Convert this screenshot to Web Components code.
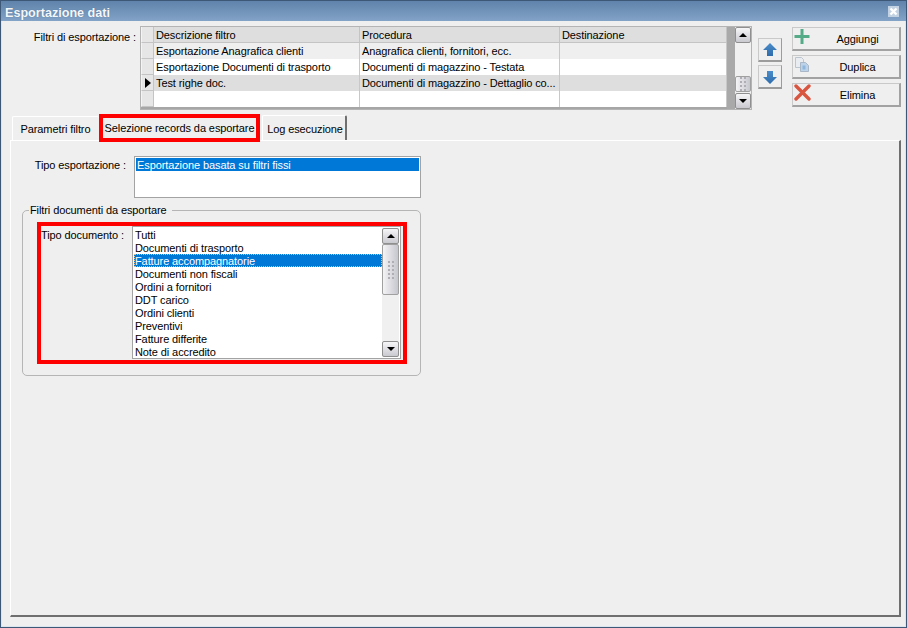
<!DOCTYPE html>
<html lang="it">
<head>
<meta charset="utf-8">
<title>Esportazione dati</title>
<style>
    html, body { margin: 0; padding: 0; background: #efefef; }
    body { font: 11px/13px "Liberation Sans", Arial, sans-serif; letter-spacing: -0.1px; color: #000; }
</style>
</head>
<body>
<export-window>
    <title-bar slot="title">Esportazione dati</title-bar>

    <top-row slot="top">
        <span slot="label">Filtri di esportazione :</span>
        <filter-grid slot="grid"></filter-grid>
        <move-button slot="moves" dir="up"></move-button>
        <move-button slot="moves" dir="down"></move-button>
        <action-button slot="actions" icon="add">Aggiungi</action-button>
        <action-button slot="actions" icon="copy">Duplica</action-button>
        <action-button slot="actions" icon="del">Elimina</action-button>
    </top-row>

    <tab-strip slot="tabs">
        <tab-item style="--w:87px">Parametri filtro</tab-item>
        <tab-item style="--w:161px" selected>Selezione records da esportare</tab-item>
        <tab-item style="--w:85px" last>Log esecuzione</tab-item>
    </tab-strip>

    <tab-panel slot="panel">
        <field-row style="--label-w:104px;--gap:8px">
            <span slot="label">Tipo esportazione :</span>
            <list-box style="width:287px;height:42px" items="Esportazione basata su filtri fissi" selected="0"></list-box>
        </field-row>
        <group-box legend="Filtri documenti da esportare">
            <red-frame>
                <field-row style="--label-w:83px;--gap:8px">
                    <span slot="label">Tipo documento :</span>
                    <list-box scroll style="width:269px;height:133px"
                        items="Tutti|Documenti di trasporto|Fatture accompagnatorie|Documenti non fiscali|Ordini a fornitori|DDT carico|Ordini clienti|Preventivi|Fatture differite|Note di accredito"
                        selected="2"></list-box>
                </field-row>
            </red-frame>
        </group-box>
    </tab-panel>
</export-window>

<script>
// small helper, every component is just a shadow root filled from a string
const shadow = (el, html) => {
    el.attachShadow({ mode: "open" }).innerHTML = html;
};

class ExportWindow extends HTMLElement {
    constructor() {
        super();
        shadow(this, `
            <style>
                :host {
                    display: flex;
                    flex-direction: column;
                    box-sizing: border-box;
                    width: 907px;
                    height: 628px;
                    background: #efefef;
                    border: 1px solid #3d5877;
                    box-shadow: inset -1px -1px 0 #dbe5ee, inset 1px 0 0 #dbe5ee;
                    overflow: hidden;
                }
                .panel { flex: 1; display: flex; min-height: 0; padding: 0 4px 10px 9px; }
            </style>
            <slot name="title"></slot>
            <slot name="top"></slot>
            <slot name="tabs"></slot>
            <div class="panel"><slot name="panel"></slot></div>
        `);
    }
}

class TitleBar extends HTMLElement {
    constructor() {
        super();
        shadow(this, `
            <style>
                :host {
                    display: flex;
                    align-items: center;
                    justify-content: space-between;
                    flex: none;
                    box-sizing: border-box;
                    height: 20px;
                    padding: 4px 7px 0 4px;
                    background: linear-gradient(#5f83ab, #83a3c7);
                    color: #f4f7fa;
                    font: bold 12.6px "Liberation Sans", Arial, sans-serif;
                    letter-spacing: 0;
                    text-shadow: 0 0 1px #4c6a8c;
                }
                svg { display: block; margin-top: -3px; }
            </style>
            <slot></slot>
            <svg width="11" height="11" viewBox="0 0 11 11">
                <rect width="11" height="11" fill="#c3d2e2"/>
                <path d="M2.5 2.5l6 6M8.5 2.5l-6 6" stroke="#fff" stroke-width="2.4"/>
            </svg>
        `);
    }
}

class TopRow extends HTMLElement {
    constructor() {
        super();
        shadow(this, `
            <style>
                :host {
                    display: flex;
                    flex: none;
                    height: 93px;
                    padding-top: 5px;
                    box-sizing: border-box;
                }
                .label { width: 135px; text-align: right; padding-top: 5px; flex: none; }
                .moves {
                    display: flex;
                    flex-direction: column;
                    align-items: center;
                    gap: 3px;
                    width: 26px;
                    margin: 12px 9px 0 5px;
                    flex: none;
                }
                .actions { display: flex; flex-direction: column; gap: 4px; width: 109px; flex: none; margin-top: 1px; }
                .grid { margin-left: 4px; flex: none; }
            </style>
            <div class="label"><slot name="label"></slot></div>
            <div class="grid"><slot name="grid"></slot></div>
            <div class="moves"><slot name="moves"></slot></div>
            <div class="actions"><slot name="actions"></slot></div>
        `);
    }
}

class FilterGrid extends HTMLElement {
    constructor() {
        super();
        const rows = [
            ["Esportazione Anagrafica clienti", "Anagrafica clienti, fornitori, ecc.", "", "#efefef"],
            ["Esportazione Documenti di trasporto", "Documenti di magazzino - Testata", "", "#fff"],
            ["Test righe doc.", "Documenti di magazzino - Dettaglio co...", "", "#dedede", true],
            ["", "", "", "#fff"],
        ];
        const cells = rows.map(([a, b, c, bg, current]) => `
            <div class="rh">${current ? '<i></i>' : ""}</div>
            <div class="c" style="background:${bg}">${a}</div>
            <div class="c" style="background:${bg}">${b}</div>
            <div class="c" style="background:${bg}">${c}</div>
        `).join("");
        shadow(this, `
            <style>
                :host {
                    display: flex;
                    box-sizing: border-box;
                    width: 612px;
                    height: 84px;
                    border: 1px solid #b4b4b4;
                    background: #fff;
                }
                .table {
                    display: grid;
                    grid-template-columns: 13px 206px 200px 167px;
                    grid-auto-rows: 16px;
                    flex: none;
                    width: 586px;
                    border-bottom: 2px solid #a6a6a6;
                    align-content: start;
                    height: 82px;
                    box-sizing: border-box;
                }
                .rh, .h {
                    background: #e2e2e2;
                    border-right: 1px solid #c4c4c4;
                    border-bottom: 1px solid #c4c4c4;
                    box-sizing: border-box;
                }
                .rh { background: #e6e6e6; display: flex; align-items: center; justify-content: center; border-left: 1px solid #f4f4f4; }
                .rh i {
                    border-left: 6px solid #000;
                    border-top: 5px solid transparent;
                    border-bottom: 5px solid transparent;
                }
                .h, .c {
                    padding: 1px 0 0 2px;
                    line-height: 15px;
                    white-space: nowrap;
                    overflow: hidden;
                    box-sizing: border-box;
                }
                .h { background: #dedede; }
                .c { border-right: 1px solid #c8c8c8; }
                .strip { width: 8px; background: #a9a9a9; flex: none; }
                scroll-bar { flex: 1; }
            </style>
            <div class="table">
                <div class="rh"></div>
                <div class="h">Descrizione filtro</div>
                <div class="h">Procedura</div>
                <div class="h">Destinazione</div>
                ${cells}
            </div>
            <div class="strip"></div>
            <scroll-bar before="33" thumb="16"></scroll-bar>
        `);
    }
}

class ScrollBar extends HTMLElement {
    constructor() {
        super();
        const before = this.getAttribute("before") || 0;
        const thumb = this.getAttribute("thumb") || 16;
        shadow(this, `
            <style>
                :host {
                    display: flex;
                    flex-direction: column;
                    box-sizing: border-box;
                    width: 16px;
                    background: #f0f0f0;
                }
                .b, .t {
                    box-sizing: border-box;
                    flex: none;
                    border: 1px solid #8f8f8f;
                    border-radius: 2px;
                    background: linear-gradient(#f6f6f8, #c9c9d0);
                    display: flex;
                    align-items: center;
                    justify-content: center;
                }
                .b { height: 16px; }
                .t {
                    background: linear-gradient(90deg, #f4f4f6, #c6c6ce);
                    border-color: #a0a0a0;
                }
                .grip {
                    width: 6px;
                    height: 100%;
                    max-height: 18px;
                    background: radial-gradient(circle at 1px 1px, #aeaeb4 1px, transparent 1.2px) 0 0 / 4px 4px;
                }
                .up { border-bottom: 4px solid #000; border-left: 4px solid transparent; border-right: 4px solid transparent; }
                .dn { border-top: 4px solid #000; border-left: 4px solid transparent; border-right: 4px solid transparent; }
                .gap { flex: 1; }
            </style>
            <div class="b"><i class="up"></i></div>
            <div style="height:${before}px;flex:none"></div>
            <div class="t" style="height:${thumb}px"><div class="grip"></div></div>
            <div class="gap"></div>
            <div class="b"><i class="dn"></i></div>
        `);
    }
}

class MoveButton extends HTMLElement {
    constructor() {
        super();
        const up = this.getAttribute("dir") === "up";
        const path = up
            ? "M8 1L15 8H11V14H5V8H1Z"
            : "M8 15L1 8H5V2H11V8H15Z";
        shadow(this, `
            <style>
                :host {
                    display: flex;
                    align-items: center;
                    justify-content: center;
                    box-sizing: border-box;
                    width: 24px;
                    height: 24px;
                    border: 1px solid #c9c9c9;
                    border-right-color: #9c9c9c;
                    border-bottom: 2px solid #9c9c9c;
                }
            </style>
            <svg width="16" height="16" viewBox="0 0 16 16">
                <defs>
                    <linearGradient id="g" x1="0" y1="0" x2="0" y2="1">
                        <stop offset="0" stop-color="#4a8ccb"/>
                        <stop offset="1" stop-color="#2f6cab"/>
                    </linearGradient>
                </defs>
                <path d="${path}" fill="url(#g)"/>
            </svg>
        `);
    }
}

const ACTION_ICONS = {
    add: `<path d="M6.5 1h3v6h6v3h-6v6h-3v-6h-6v-3h6z" fill="#55ab87"/>`,
    copy: `<path d="M1.5 1.5h6l2 2v8h-8z" fill="#e9edf2" stroke="#bcc4ce"/>
           <path d="M6.5 6.5h5l3 3v6h-8z" fill="#bcd3ea" stroke="#a9b7c6"/>
           <path d="M8.5 9.5h3v4h-3z" fill="#8fb6dd"/>`,
    del: `<path d="M2 2l13 13M15 2L2 15" stroke="#d9553f" stroke-width="3.4" stroke-linecap="round"/>`,
};

class ActionButton extends HTMLElement {
    constructor() {
        super();
        shadow(this, `
            <style>
                :host {
                    display: flex;
                    align-items: center;
                    box-sizing: border-box;
                    height: 24px;
                    border: 1px solid #c9c9c9;
                    border-right: 2px solid #a2a2a2;
                    border-bottom: 2px solid #a2a2a2;
                    padding-left: 1px;
                }
                svg { flex: none; display: block; margin-top: -4px; }
                span { flex: 1; text-align: center; padding-left: 5px; padding-top: 2px; }
            </style>
            <svg width="17" height="17" viewBox="0 0 17 17">${ACTION_ICONS[this.getAttribute("icon")]}</svg>
            <span><slot></slot></span>
        `);
    }
}

class TabStrip extends HTMLElement {
    constructor() {
        super();
        shadow(this, `
            <style>
                :host {
                    display: flex;
                    align-items: flex-start;
                    flex: none;
                    height: 26px;
                    padding-left: 11px;
                    position: relative;
                    z-index: 1;
                }
            </style>
            <slot></slot>
        `);
    }
}

class TabItem extends HTMLElement {
    constructor() {
        super();
        shadow(this, `
            <style>
                :host {
                    display: flex;
                    align-items: center;
                    justify-content: center;
                    box-sizing: border-box;
                    flex: none;
                    width: var(--w);
                    height: 24px;
                    margin-top: 2px;
                    border-top: 1px solid #fff;
                    border-left: 1px solid #fff;
                    border-radius: 2px 2px 0 0;
                    white-space: nowrap;
                    padding: 2px 1px 0 0;
                }
                :host([selected]) {
                    height: 28px;
                    margin: 0;
                    padding: 0;
                    border: 4px solid #f00;
                    border-radius: 0;
                }
                :host([last]) {
                    height: 25px;
                    margin: 1px 0 0 2px;
                    border-right: 2px solid #6f6f6f;
                    padding: 2px 0 0 2px;
                }
            </style>
            <slot></slot>
        `);
    }
}

class TabPanel extends HTMLElement {
    constructor() {
        super();
        shadow(this, `
            <style>
                :host {
                    display: block;
                    box-sizing: border-box;
                    width: 891px;
                    border-top: 1px solid #fff;
                    border-left: 1px solid #fff;
                    border-right: 2px solid #6f6f6f;
                    border-bottom: 2px solid #6f6f6f;
                    padding: 15px 0 0 11px;
                }
            </style>
            <slot></slot>
        `);
    }
}

class FieldRow extends HTMLElement {
    constructor() {
        super();
        shadow(this, `
            <style>
                :host { display: flex; align-items: flex-start; }
                .label {
                    box-sizing: border-box;
                    flex: none;
                    width: var(--label-w);
                    margin-right: var(--gap);
                    padding-top: 3px;
                    text-align: right;
                    white-space: nowrap;
                }
            </style>
            <div class="label"><slot name="label"></slot></div>
            <slot></slot>
        `);
    }
}

class ListBox extends HTMLElement {
    constructor() {
        super();
        const selected = Number(this.getAttribute("selected"));
        const hasBar = this.hasAttribute("scroll");
        const items = this.getAttribute("items").split("|").map((text, i) =>
            `<div class="i${i === selected ? " sel" : ""}${i === selected && hasBar ? " focus" : ""}">${text}</div>`).join("");
        const bar = hasBar
            ? `<scroll-bar before="0" thumb="51" style="width:17px"></scroll-bar>` : "";
        shadow(this, `
            <style>
                :host {
                    display: flex;
                    box-sizing: border-box;
                    flex: none;
                    border: 1px solid #a3a3a3;
                    padding: 1px;
                    background: #fff;
                }
                .list { flex: 1; min-width: 0; overflow: hidden; }
                .i { height: 13px; line-height: 14px; padding-left: 1px; white-space: nowrap; }
                .sel { background: #0078d7; color: #fff; }
                .focus { outline: 1px dotted #eebb80; outline-offset: -1px; }
            </style>
            <div class="list">${items}</div>
            ${bar}
        `);
    }
}

class GroupBox extends HTMLElement {
    constructor() {
        super();
        shadow(this, `
            <style>
                :host {
                    display: block;
                    box-sizing: border-box;
                    width: 399px;
                    height: 166px;
                    margin-top: 12px;
                    border: 1px solid #b5b5b5;
                    border-radius: 5px;
                    padding: 11px 13px 0 14px;
                    position: relative;
                }
                /* the caption sits on top of the frame line */
                .legend {
                    position: absolute;
                    left: 6px;
                    top: -7px;
                    padding: 0 5px 0 1px;
                    background: #efefef;
                }
            </style>
            <div class="legend">${this.getAttribute("legend")}</div>
            <slot></slot>
        `);
    }
}

class RedFrame extends HTMLElement {
    constructor() {
        super();
        shadow(this, `
            <style>
                :host {
                    display: block;
                    box-sizing: border-box;
                    width: 370px;
                    height: 142px;
                    border: 4px solid #f00;
                }
            </style>
            <slot></slot>
        `);
    }
}

customElements.define("export-window", ExportWindow);
customElements.define("title-bar", TitleBar);
customElements.define("top-row", TopRow);
customElements.define("filter-grid", FilterGrid);
customElements.define("scroll-bar", ScrollBar);
customElements.define("move-button", MoveButton);
customElements.define("action-button", ActionButton);
customElements.define("tab-strip", TabStrip);
customElements.define("tab-item", TabItem);
customElements.define("tab-panel", TabPanel);
customElements.define("field-row", FieldRow);
customElements.define("list-box", ListBox);
customElements.define("group-box", GroupBox);
customElements.define("red-frame", RedFrame);
</script>
</body>
</html>
